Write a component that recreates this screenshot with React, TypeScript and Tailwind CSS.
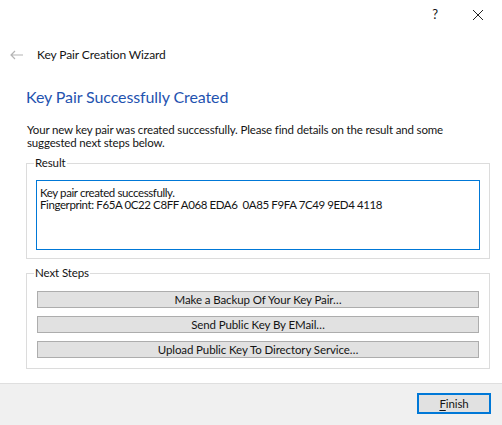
const font = "font-['Segoe_UI',Lato,'Liberation_Sans',sans-serif]";

const nextSteps = [
  "Make a Backup Of Your Key Pair…",
  "Send Public Key By EMail…",
  "Upload Public Key To Directory Service…",
];

function GroupBox({ label, className, children }: { label: string; className?: string; children: React.ReactNode }) {
  return (
    <div className={`relative border border-[#dcdcdc] ${className ?? ""}`}>
      <span className="absolute -top-[9px] left-[7px] bg-white px-[1px] leading-[16px]">{label}</span>
      {children}
    </div>
  );
}

export default function App() {
  return (
    <div className={`w-[502px] h-[425px] bg-white flex flex-col text-[11.5px] tracking-[-0.1px] text-[#141414] ${font}`}>
      {/* caption buttons */}
      <div className="h-[28px] flex justify-end items-center pr-[18px] gap-[34px] shrink-0">
        <span className="text-[13px] leading-none">?</span>
        <svg width="12" height="12" viewBox="0 0 12 12" className="mt-[2px]">
          <path d="M1 1L11 11M11 1L1 11" stroke="#222" strokeWidth="1" fill="none" />
        </svg>
      </div>

      {/* wizard title */}
      <div className="flex items-center h-[20px] mt-[17px] pl-[10px] shrink-0">
        <svg width="13" height="10" viewBox="0 0 13 10">
          <path d="M5 1L1 5L5 9M1 5H13" stroke="#b4b4b4" strokeWidth="1.2" fill="none" />
        </svg>
        <span className="ml-[14px] text-[12px]">Key Pair Creation Wizard</span>
      </div>

      <div className="flex-1 flex flex-col px-[27px]">
        <h1 className="text-[16px] tracking-[-0.1px] text-[#1f53b0] mt-[21px] leading-[22px] -ml-[1px]">Key Pair Successfully Created</h1>
        <p className="mt-[15px] leading-[13px] tracking-[-0.15px]">
          Your new key pair was created successfully. Please find details on the result and some suggested next steps below.
        </p>

        <GroupBox label="Result" className="mt-[14px] -ml-[1px] w-[464px] h-[96px] pt-[16px] px-[9px]">
          <div className="border border-[#0078d7] h-[70px] px-[3px] pt-[6px] leading-[12px] tracking-[-0.4px] whitespace-pre">
            {"Key pair created successfully.\nFingerprint: F65A 0C22 C8FF A068 EDA6  0A85 F9FA 7C49 9ED4 4118"}
          </div>
        </GroupBox>

        <GroupBox label="Next Steps" className="mt-[14px] -ml-[1px] w-[464px] h-[96px] pt-[17px] px-[10px] flex flex-col gap-[8px]">
          {nextSteps.map((s) => (
            <button
              key={s}
              className="h-[17px] w-full bg-[#e1e1e1] border border-[#adadad] leading-[14px] text-center"
            >
              {s}
            </button>
          ))}
        </GroupBox>
      </div>

      {/* footer */}
      <div className="h-[42px] shrink-0 bg-[#f0f0f0] border-t border-[#dfdfdf] flex justify-end items-start pt-[9px] pr-[11px]">
        <button className="w-[74px] h-[21px] bg-[#e1e1e1] border-2 border-[#0078d7] leading-[16px]">
          <span className="underline underline-offset-2">F</span>inish
        </button>
      </div>
    </div>
  );
}
